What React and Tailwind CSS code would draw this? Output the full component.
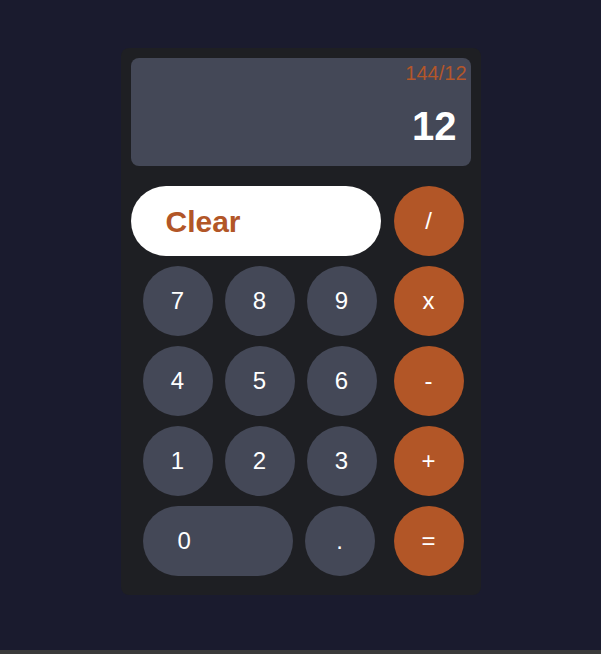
import React, { useState } from 'react';

const digitBtn = 'w-[70px] h-[70px] rounded-full bg-[#444857] text-white text-[24px] flex items-center justify-center shrink-0';
const opBtn = 'w-[70px] h-[70px] rounded-full bg-[#b25627] text-white text-[24px] flex items-center justify-center shrink-0';

export default function App() {
  const [expr, setExpr] = useState('144/12');
  const [result, setResult] = useState('12');

  const press = (k) => {
    setExpr(expr + k);
  };

  const clear = () => {
    setExpr('');
    setResult('0');
  };

  const calc = () => {
    try {
      const r = Function('return ' + expr.replace(/x/g, '*'))();
      setResult(String(r));
    } catch (e) {
      setResult('Error');
    }
  };

  const rows = [
    ['7', '8', '9', 'x'],
    ['4', '5', '6', '-'],
    ['1', '2', '3', '+'],
  ];

  return (
    <div className="min-h-[654px] bg-[#1a1b2e] flex flex-col" style={{ fontFamily: '"Liberation Sans", Arial, sans-serif' }}>
      <div className="h-[650px] pt-[48px]">
        <div className="w-[360px] mx-auto bg-[#1e1f23] rounded-[8px] px-[10px] pt-[10px] pb-[19px]">
          {/* pantalla */}
          <div className="h-[108px] bg-[#444857] rounded-[8px] flex flex-col items-end pt-[4px]">
            <div className="text-[20px] leading-[23px] text-[#b4562a] pr-[4px]">{expr}</div>
            <div className="text-[40px] leading-[46px] font-bold text-white pr-[14px] mt-[18px]">{result}</div>
          </div>

          <div className="flex items-center mt-[20px]">
            <button onClick={clear} className="w-[250px] h-[70px] rounded-full bg-white text-[#b25627] text-[30px] font-bold text-left pl-[35px] shrink-0">
              Clear
            </button>
            <button onClick={() => press('/')} className={opBtn + ' ml-[13px]'}>/</button>
          </div>

          {rows.map((row, i) => (
            <div key={i} className="flex items-center mt-[10px] pl-[12px]">
              <button onClick={() => press(row[0])} className={digitBtn}>{row[0]}</button>
              <button onClick={() => press(row[1])} className={digitBtn + ' ml-[12px]'}>{row[1]}</button>
              <button onClick={() => press(row[2])} className={digitBtn + ' ml-[12px]'}>{row[2]}</button>
              <button onClick={() => press(row[3])} className={opBtn + ' ml-[17px]'}>{row[3]}</button>
            </div>
          ))}

          <div className="flex items-center mt-[10px] pl-[12px]">
            <button onClick={() => press('0')} className="w-[150px] h-[70px] rounded-full bg-[#444857] text-white text-[24px] text-left pl-[35px] shrink-0">0</button>
            <button onClick={() => press('.')} className={digitBtn + ' ml-[12px]'}>.</button>
            <button onClick={calc} className={opBtn + ' ml-[19px]'}>=</button>
          </div>
        </div>
      </div>
      <div className="h-[4px] bg-[#3a3a3a]"></div>
    </div>
  );
}
